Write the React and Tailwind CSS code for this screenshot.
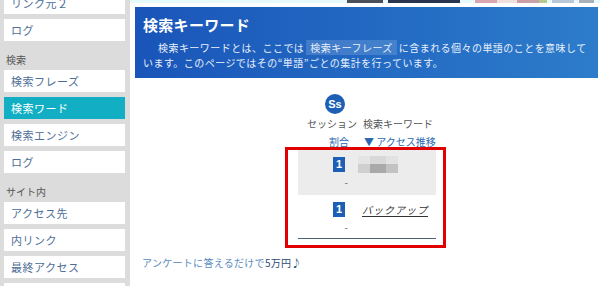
import React from "react";

const font = { fontFamily: '"Noto Sans CJK JP", "Noto Sans", sans-serif' };

function Item({ children, active, first }) {
  return (
    <div
      className={`shrink-0 ml-[4px] mr-[5px] h-[22px] flex items-center pl-[7px] text-[11px] tracking-[0.5px] ${
        active ? "bg-[#12afc4] text-white" : "bg-white text-[#4d6e96]"
      } ${first ? "-mt-[8px]" : ""}`}
    >
      {children}
    </div>
  );
}

function Label({ children }) {
  return (
    <div className="shrink-0 -my-[5px] h-[29px] pt-[12px] pl-[6px] text-[10px] leading-[14px] text-[#555]">
      {children}
    </div>
  );
}

function Blur() {
  return (
    <div className="flex flex-col w-[40px] h-[17px] blur-[0.6px]">
      <div className="flex h-[8px]">
        <div className="w-[12px] bg-[#e4e4e4]" />
        <div className="w-[16px] bg-[#d8d8d8]" />
        <div className="w-[12px] bg-[#e2e2e2]" />
      </div>
      <div className="flex h-[9px]">
        <div className="w-[12px] bg-[#cfcfcf]" />
        <div className="w-[16px] bg-[#a9a9a9]" />
        <div className="w-[12px] bg-[#c2c2c2]" />
      </div>
    </div>
  );
}

function Badge() {
  return (
    <div
      className="mr-[13px] w-[12px] h-[15px] bg-[#1d5fb5] text-white text-[11px] font-bold flex items-center justify-center"
      style={{ fontFamily: '"Liberation Sans", Arial, sans-serif' }}
    >
      1
    </div>
  );
}

export default function App() {
  return (
    <div className="w-[600px] h-[286px] overflow-hidden flex bg-white" style={font}>
      {/* Sidebar */}
      <div className="w-[130px] shrink-0 bg-[#dcdcdc] flex flex-col gap-[5px] overflow-hidden">
        <Item first>リンク元２</Item>
        <Item>ログ</Item>
        <Label>検索</Label>
        <Item>検索フレーズ</Item>
        <Item active>検索ワード</Item>
        <Item>検索エンジン</Item>
        <Item>ログ</Item>
        <Label>サイト内</Label>
        <Item>アクセス先</Item>
        <Item>内リンク</Item>
        <Item>最終アクセス</Item>
        <Item> </Item>
      </div>

      {/* Main */}
      <div className="flex-1 flex flex-col">
        {/* top strip */}
        <div className="h-[3px] shrink-0 bg-[#e6fafc] flex">
          <div className="w-[217px]" />
          <div className="w-[36px] bg-[#4a4f5a]" />
          <div className="w-[5px]" />
          <div className="w-[72px] bg-[#2c3550]" />
          <div className="w-[15px]" />
          <div className="w-[22px] bg-[#d9a6b0]" />
          <div className="w-[20px] bg-[#f0e0dc]" />
          <div className="w-[22px] bg-[#c9a0a8]" />
          <div className="w-[8px] bg-[#b7c98a]" />
          <div className="w-[5px]" />
          <div className="w-[22px] bg-[#b8c8d8]" />
          <div className="w-[5px]" />
          <div className="w-[15px] bg-[#a8b0b8]" />
        </div>

        {/* blue header */}
        <div className="shrink-0 mt-[4px] ml-[5px] mr-[2px] h-[71px] bg-gradient-to-r from-[#1a55b9] to-[#2d7ccb] pt-[8px] pl-[8px] pr-[8px]">
          <div className="text-[15px] leading-[20px] font-bold text-white tracking-[0.3px]">
            検索キーワード
          </div>
          <p className="mt-[5px] text-[10px] leading-[15px] text-[#e8f0fb] tracking-[0.45px] indent-[15px]">
            検索キーワードとは、ここでは
            <span className="bg-white/15 px-[4px] mx-[2px]">検索キーフレーズ</span>
            に含まれる個々の単語のことを意味しています。このページではその“単語”ごとの集計を行っています。
          </p>
        </div>

        {/* table */}
        <div className="flex justify-center pl-[4px] mt-[16px]">
          <div className="w-[138px] flex flex-col text-[10px]">
            <div className="flex">
              <div className="w-[60px] flex justify-end pr-[13px]">
                <div
                  className="w-[20px] h-[20px] rounded-full bg-[#1d5fb5] text-white text-[11px] font-bold flex items-center justify-center"
                  style={{ fontFamily: '"Liberation Sans", Arial, sans-serif' }}
                >
                  Ss
                </div>
              </div>
            </div>
            <div className="flex mt-[3px] leading-[14px]">
              <div className="w-[60px] text-right pr-[1px] text-[#555]">セッション</div>
              <div className="flex-1 pl-[5px] text-[#555]">検索キーワード</div>
            </div>
            <div className="flex mt-[4px] leading-[14px]">
              <div className="w-[60px] text-right pr-[9px] text-[#2c68b0]">割合</div>
              <div className="flex-1 pl-[6px] text-[#2c68b0] whitespace-nowrap">▼ アクセス推移</div>
            </div>

            <div className="relative border-t-[1px] border-[#8ea2bf]">
              {/* row 1 */}
              <div className="flex h-[45px] bg-[#ececec]">
                <div className="w-[60px] flex flex-col items-end pt-[7px]">
                  <Badge />
                  <div className="mr-[10px] mt-[3px] text-[10px] leading-[14px] text-[#666]">-</div>
                </div>
                <div className="flex-1 pt-[6px]">
                  <Blur />
                </div>
              </div>
              {/* row 2 */}
              <div className="flex h-[44px] border-b-[1px] border-[#4c6075]">
                <div className="w-[60px] flex flex-col items-end pt-[7px]">
                  <Badge />
                  <div className="mr-[10px] mt-[3px] text-[10px] leading-[14px] text-[#666]">-</div>
                </div>
                <div className="flex-1 pl-[4px] pt-[7px]">
                  <span className="text-[10px] leading-[14px] text-[#333] underline underline-offset-2 tracking-[1px] italic">
                    バックアップ
                  </span>
                </div>
              </div>
              {/* annotation */}
              <div className="absolute left-[-13px] top-[-3px] w-[161px] h-[101px] border-[3px] border-[#e00000]" />
            </div>
          </div>
        </div>

        {/* footer */}
        <div className="mt-[17px] pl-[12px] text-[10px] leading-[14px] text-[#5a8ac2] tracking-[0.3px]">
          アンケートに答えるだけで<span className="text-[#2a4a74]">5万円♪</span>
        </div>
      </div>
    </div>
  );
}
